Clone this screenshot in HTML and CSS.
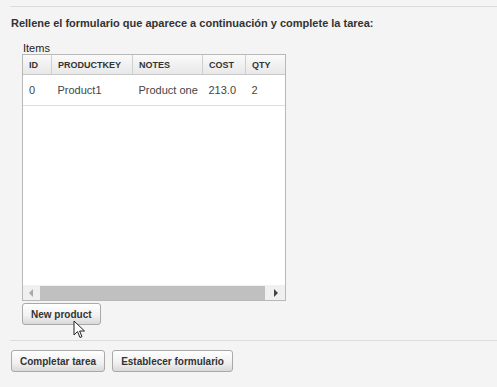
FILE: index.html
```html
<!DOCTYPE html>
<html lang="es">
<head>
  <meta charset="UTF-8">
  <title>Completar tarea</title>
  <link rel="stylesheet" href="styles.css">
</head>
<body>
  <div class="rule"></div>
  <h2 class="intro">Rellene el formulario que aparece a continuación y complete la tarea:</h2>

  <section class="items">
    <div class="items-label">Items</div>
    <div class="grid">
      <table class="grid-table">
        <thead>
          <tr>
            <th class="c-id">ID</th>
            <th class="c-key">PRODUCTKEY</th>
            <th class="c-notes">NOTES</th>
            <th class="c-cost">COST</th>
            <th class="c-qty">QTY</th>
          </tr>
        </thead>
        <tbody>
          <tr>
            <td>0</td>
            <td>Product1</td>
            <td>Product one</td>
            <td>213.0</td>
            <td>2</td>
          </tr>
        </tbody>
      </table>
      <div class="grid-empty"></div>
      <!-- horizontal scrollbar -->
      <div class="hscroll">
        <span class="arrow left"></span>
        <span class="thumb"></span>
        <span class="arrow right"></span>
      </div>
    </div>
    <div class="cursor-wrap">
      <button class="btn">New product</button>
      <svg class="cursor" width="13" height="20" viewBox="0 0 13 20">
        <path d="M1 1 L1 15 L4.5 11.5 L7 17.5 L9 16.6 L6.6 11 L11.5 11 Z" fill="#fff" stroke="#222" stroke-width="1"/>
      </svg>
    </div>
  </section>

  <div class="rule rule-bottom"></div>

  <div class="actions">
    <button class="btn">Completar tarea</button>
    <button class="btn">Establecer formulario</button>
  </div>
</body>
</html>
```

FILE: styles.css
```css
/* Light gray form page */
body {
  background-color: #f4f4f4;
  font-family: 'Liberation Sans', Arial, sans-serif;
  color: #333;
  margin: 0;
  padding: 0;
  height: 100vh;
}

/* Horizontal separators */
.rule {
  margin: 6px 0 0 10px;
  border-top: 1px solid #dcdcdc;
}

.rule-bottom {
  margin-top: 15px;
}

h2.intro {
  font-size: 11px;
  font-weight: bold;
  color: #333;
  margin: 10px 0 0 11px;
  line-height: 13px;
}

/* Items grid */
.items {
  padding-left: 22px;
  margin-top: 12px;
}

.items-label {
  font-size: 11px;
  line-height: 12px;
  color: #222;
  padding-left: 1px;
}

.grid {
  width: 262px;
  height: 245px;
  border: 1px solid #b8b8b8;
  background-color: #fff;
  display: flex;
  flex-direction: column;
}

.grid-table {
  border-collapse: collapse;
  width: 100%;
  table-layout: fixed;
  font-size: 11px;
}

.grid-table th {
  height: 19px;
  padding: 0 0 0 6px;
  text-align: left;
  font-size: 9px;
  font-weight: bold;
  color: #333;
  background: linear-gradient(#fafafa, #e8e8e8);
  border-right: 1px solid #cfcfcf;
  border-bottom: 1px solid #c8c8c8;
}

.grid-table th:last-child {
  border-right: none;
}

.grid-table td {
  height: 30px;
  padding: 0 0 0 6px;
  color: #444;
  white-space: nowrap;
  overflow: hidden;
  border-bottom: 1px solid #dedede;
}

.c-id { width: 22px; }
.c-key { width: 74px; }
.c-notes { width: 63px; }
.c-cost { width: 36px; }

.grid-empty {
  flex: 1;
}

.hscroll {
  height: 15px;
  background-color: #f0f0f0;
  display: flex;
  align-items: center;
}

.hscroll .thumb {
  flex: 1;
  height: 14px;
  background-color: #c0c0c0;
}

.arrow {
  width: 17px;
  height: 15px;
  position: relative;
}

.arrow.right {
  width: 20px;
}

.arrow::after {
  content: "";
  position: absolute;
  top: 4px;
  border-top: 4px solid transparent;
  border-bottom: 4px solid transparent;
}

.arrow.left::after {
  left: 6px;
  border-right: 4px solid #aaa;
}

.arrow.right::after {
  left: 9px;
  border-left: 4px solid #444;
}

/* Buttons */
.btn {
  height: 22px;
  padding: 0 8px;
  border: 1px solid #a9a9a9;
  border-radius: 3px;
  background: linear-gradient(#ffffff, #f0f0f0 60%, #d9d9d9);
  font-family: 'Liberation Sans', Arial, sans-serif;
  font-size: 10px;
  font-weight: bold;
  color: #333;
  cursor: pointer;
}

.cursor-wrap {
  position: relative;
  margin-top: 2px;
}

.cursor {
  position: absolute;
  left: 51px;
  top: 17px;
}

.actions {
  display: flex;
  gap: 7px;
  margin: 9px 0 0 11px;
}
```
